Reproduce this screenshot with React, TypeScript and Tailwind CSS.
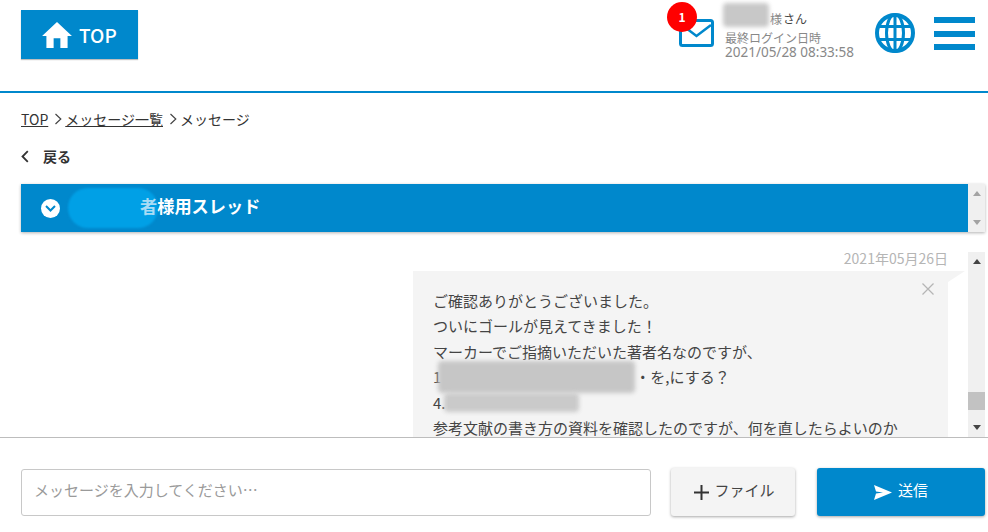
import React from "react";

const font = { fontFamily: '"Noto Sans CJK JP", "Noto Sans", sans-serif' };

function Bar({ up, color }: { up: boolean; color: string }) {
  return (
    <svg width="8" height="5" viewBox="0 0 8 5">
      <path d={up ? "M4 0 8 5H0Z" : "M0 0H8L4 5Z"} fill={color} />
    </svg>
  );
}

function Crumb() {
  return (
    <svg width="8" height="12" viewBox="0 0 8 12" className="shrink-0 ml-[6px] mr-[3px]">
      <path d="M1.500 1 6.800 6l-5.300 5" fill="none" stroke="#444" strokeWidth="1.200" />
    </svg>
  );
}

export default function App() {
  return (
    <div style={font} className="w-[988px] h-[532px] bg-white overflow-hidden text-[#333] text-[14px] leading-none">
      <header className="h-[93px] border-b-2 border-[#0088cc] pl-[21px] pr-[13px] flex items-start justify-between">
        <div className="mt-[10px] w-[117px] h-[49px] bg-[#0088cc] shadow-[0_1px_1px_rgba(0,0,0,0.25)] flex items-center pl-[21px] gap-[7px] text-white">
          <svg width="30" height="26" viewBox="0 0 31 27">
            <path d="M15.500 0 31 14.500h-4.500V27h-7.500V17h-7v10H4.500V14.500H0Z" fill="#fff" />
          </svg>
          <span className="text-[19px] font-medium">TOP</span>
        </div>
        <div className="flex items-start">
          <div className="relative mt-[19px] mr-[11px] w-[35px] h-[28px]">
            <svg width="35" height="28" viewBox="0 0 35 28">
              <rect x="1.500" y="1.500" width="32" height="25" rx="2" fill="#fff" stroke="#0088cc" strokeWidth="3" />
              <path d="M3 6 17.500 17 32 6" fill="none" stroke="#0088cc" strokeWidth="2.500" />
            </svg>
            <span className="absolute left-[-12px] top-[-17px] w-[30px] h-[30px] rounded-full bg-[#ff0000] text-white flex items-center justify-center text-[12px] font-bold">1</span>
          </div>
          <div className="mt-[11px] w-[130px] text-[12px]">
            <div className="relative h-[16px] flex items-center pl-[45px] text-[#444] whitespace-nowrap">
              <span className="text-[#888]">様</span>
              <span className="ml-[1px]">さん</span>
              <span className="absolute left-[-2px] top-[-8px] w-[46px] h-[24px] bg-[#c8c8c8] blur-[2px] rounded-sm"></span>
            </div>
            <div className="mt-[3px] text-[#888] leading-[15px]">
              <div>最終ログイン日時</div>
              <div className="text-[13.500px] whitespace-nowrap" style={{ fontFamily: '"Noto Sans", sans-serif' }}>2021/05/28 08:33:58</div>
            </div>
          </div>
          <svg className="mt-[13px] ml-[20px]" width="40" height="40" viewBox="0 0 40 40" fill="none" stroke="#0088cc" strokeWidth="3">
            <circle cx="20" cy="20" r="18" strokeWidth="4" />
            <ellipse cx="20" cy="20" rx="8.500" ry="18.500" />
            <path d="M20 1v38M3 13.500h34M3 26.500h34" />
          </svg>
          <div className="mt-[17px] ml-[19px] w-[41px] flex flex-col gap-[7.500px]">
            <div className="h-[6px] bg-[#0088cc]"></div>
            <div className="h-[6px] bg-[#0088cc]"></div>
            <div className="h-[6px] bg-[#0088cc]"></div>
          </div>
        </div>
      </header>

      <div className="pl-[21px] pr-[3px]">
        <nav className="mt-[18px] h-[16px] flex items-center">
          <span className="underline">TOP</span>
          <Crumb />
          <span className="underline">メッセージ一覧</span>
          <Crumb />
          <span>メッセージ</span>
        </nav>
        <div className="mt-[21px] h-[16px] flex items-center gap-[14px] font-bold">
          <svg width="8" height="13" viewBox="0 0 8 13" className="shrink-0">
            <path d="M6.800 1.200 1.500 6.500l5.300 5.300" fill="none" stroke="#333" strokeWidth="1.800" />
          </svg>
          <span>戻る</span>
        </div>

        <div className="mt-[20px] h-[48px] flex shadow-[0_1px_3px_rgba(0,0,0,0.3)]">
          <div className="relative flex-1 bg-[#0088cc] flex items-center pl-[20px] text-white font-bold text-[17.200px]">
            <span className="absolute left-[47px] top-[4px] w-[90px] h-[40px] rounded-[20px] bg-[#00a0e6] blur-[1px]"></span>
            <span className="relative w-[19px] h-[19px] rounded-full bg-white flex items-center justify-center">
              <svg width="11" height="7" viewBox="0 0 11 7"><path d="M1 1l4.500 4.500L10 1" fill="none" stroke="#0088cc" strokeWidth="2" /></svg>
            </span>
            <span className="relative ml-[80px] mb-[4px]"><span className="text-[#a8dcf5]">者</span>様用スレッド</span>
          </div>
          <div className="w-[17px] bg-[#f0f0f0] flex flex-col items-center justify-between py-[7px]">
            <Bar up color="#a3a3a3" />
            <Bar up={false} color="#a3a3a3" />
          </div>
        </div>

        <div className="mt-[18px] h-[187px] flex">
          <div className="flex-1 overflow-hidden flex flex-col items-end">
            <div className="h-[16px] shrink-0 mr-[20px] text-[14px] text-[#b5b5b5] flex items-center whitespace-nowrap">2021年05月26日</div>
            <div className="mt-[5px] relative w-[535px] bg-[#f4f4f4] mr-[20px] shrink-0 h-[400px]">
              <div className="relative pl-[20px] pt-[17px] text-[15px] text-[#444] leading-[25.400px] whitespace-nowrap">
                <svg className="absolute right-[14px] top-[12px]" width="12" height="12" viewBox="0 0 12 12"><path d="M.5.500l11 11m0-11-11 11" stroke="#b5b5b5" strokeWidth="1.300" /></svg>
                <div>ご確認ありがとうございました。</div>
                <div>ついにゴールが見えてきました！</div>
                <div>マーカーでご指摘いただいた著者名なのですが、</div>
                <div className="relative">1<span className="pl-[194px]">・を,にする？</span>
                  <span className="absolute left-[5px] top-[-3px] w-[197px] h-[32px] bg-[#c6c6c6] blur-[2px] rounded"></span>
                </div>
                <div className="relative">4.
                  <span className="absolute left-[11px] top-[3px] w-[135px] h-[19px] bg-[#cacaca] blur-[2px] rounded"></span>
                </div>
                <div>参考文献の書き方の資料を確認したのですが、何を直したらよいのか</div>
              </div>
              <svg className="absolute top-0 left-full" width="17" height="11" viewBox="0 0 17 11"><path d="M0 0H17L0 11Z" fill="#f4f4f4" /></svg>
            </div>
          </div>
          <div className="relative mt-[2px] w-[17px] bg-[#f0f0f0] flex flex-col items-center justify-between py-[7px] z-10">
            <Bar up color="#444" />
            <div className="absolute left-0 top-[140px] w-[17px] h-[18px] bg-[#c2c2c2]"></div>
            <Bar up={false} color="#444" />
          </div>
        </div>
      </div>

      <div className="h-px bg-[#bdbdbd]"></div>

      <div className="mt-[30px] pl-[21px] flex items-start">
        <div className="mt-[1px] w-[630px] h-[47px] border border-[#c8c8c8] rounded-[3px] flex items-center pl-[12px] pb-[6px] text-[#9a9a9a] text-[15px]">
          メッセージを入力してください…
        </div>
        <div className="ml-[20px] w-[124px] h-[48px] bg-[#f4f4f4] rounded-[3px] shadow-[0_1px_3px_rgba(0,0,0,0.35)] flex items-center justify-center gap-[5px] text-[15px] text-[#444]">
          <svg className="ml-[3px]" width="15" height="15" viewBox="0 0 15 15"><path d="M7.500 0v15M0 7.500h15" stroke="#333" strokeWidth="2" /></svg>
          <span className="mb-[5px]">ファイル</span>
        </div>
        <div className="ml-[22px] w-[168px] h-[48px] bg-[#0088cc] rounded-[3px] shadow-[0_1px_3px_rgba(0,0,0,0.35)] flex items-center justify-center gap-[6px] text-[15px] text-white">
          <svg width="18" height="15" viewBox="0 0 18 15"><path d="M0 0 18 7.500 0 15 2 8.500 9 7.500 2 6.500Z" fill="#fff" /></svg>
          <span className="mb-[5px]">送信</span>
        </div>
      </div>
    </div>
  );
}
